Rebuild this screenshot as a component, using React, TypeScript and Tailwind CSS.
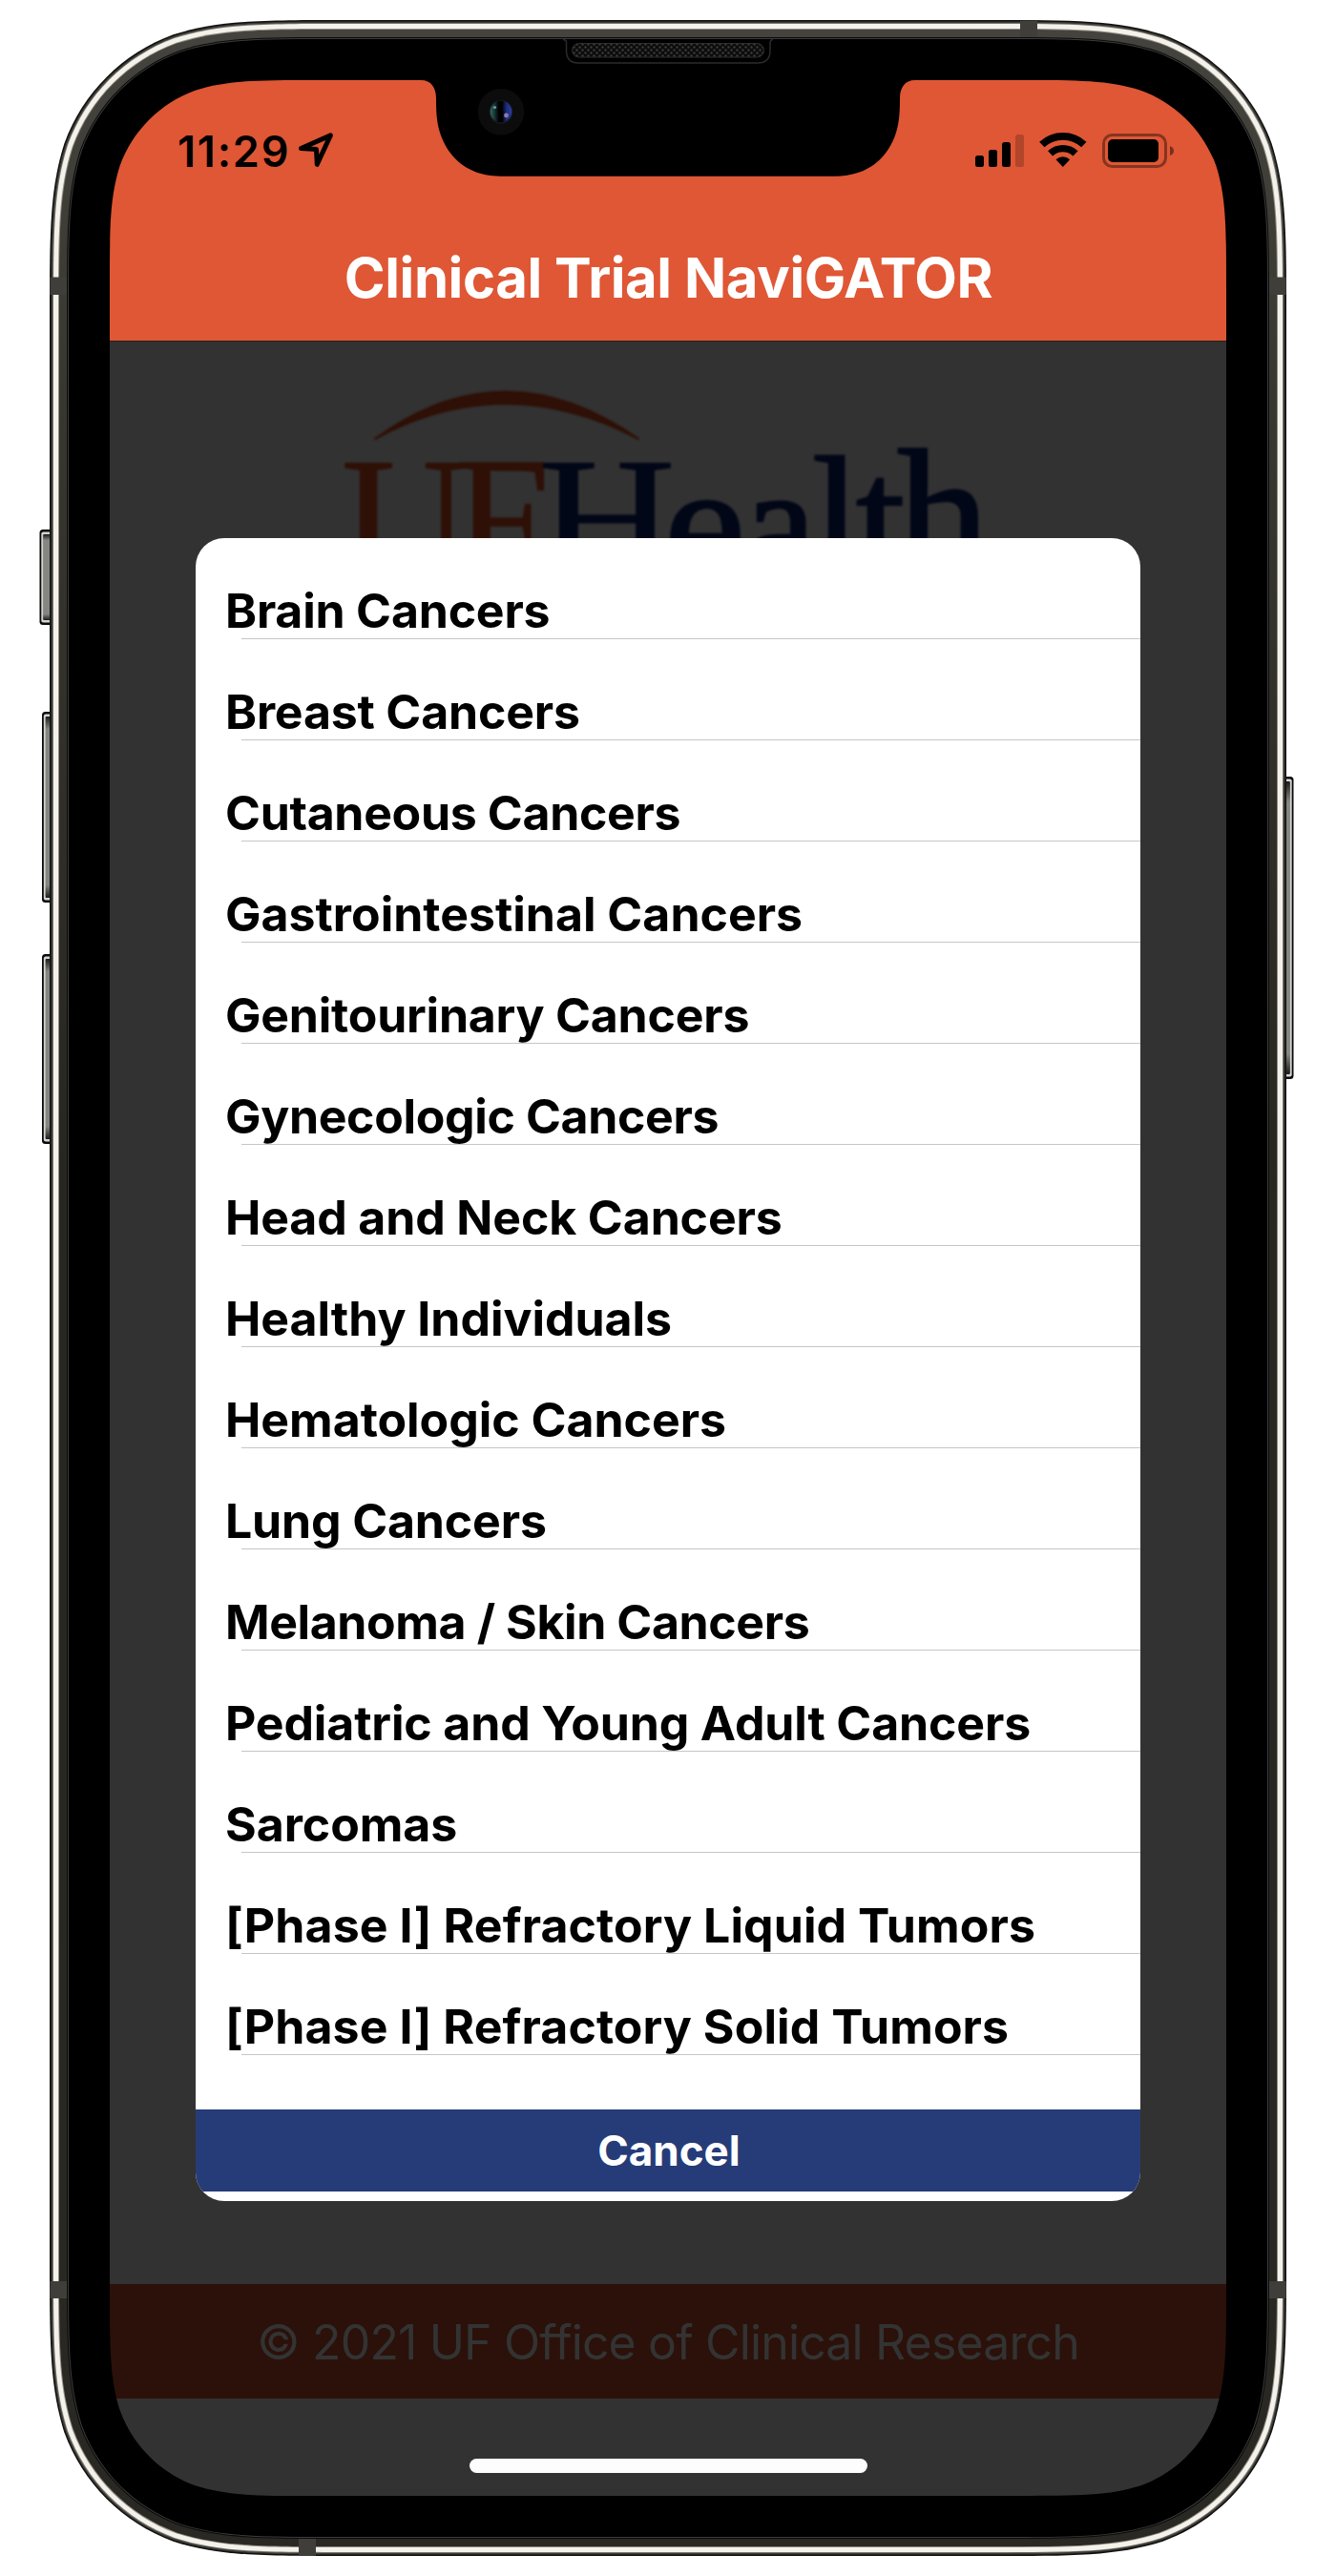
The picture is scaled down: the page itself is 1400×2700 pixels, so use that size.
const options = [
  { label: "Brain Cancers", tracking: "tracking-[-0.2px]" },
  { label: "Breast Cancers", tracking: "tracking-[-0.19px]" },
  { label: "Cutaneous Cancers", tracking: "tracking-[-0.34px]" },
  { label: "Gastrointestinal Cancers", tracking: "tracking-[0px]" },
  { label: "Genitourinary Cancers", tracking: "tracking-[-0.22px]" },
  { label: "Gynecologic Cancers", tracking: "tracking-[-0.36px]" },
  { label: "Head and Neck Cancers", tracking: "tracking-[-0.13px]" },
  { label: "Healthy Individuals", tracking: "tracking-[-0.03px]" },
  { label: "Hematologic Cancers", tracking: "tracking-[-0.03px]" },
  { label: "Lung Cancers", tracking: "tracking-[-0.16px]" },
  { label: "Melanoma / Skin Cancers", tracking: "tracking-[-0.4px]" },
  { label: "Pediatric and Young Adult Cancers", tracking: "tracking-[-0.14px]" },
  { label: "Sarcomas", tracking: "tracking-[-0.05px]" },
  { label: "[Phase I] Refractory Liquid Tumors", tracking: "tracking-[0.09px]" },
  { label: "[Phase I] Refractory Solid Tumors", tracking: "tracking-[0.08px]" },
];

/** Continuous-curvature rounded rectangle, as used for the device outline. */
function squircle(x: number, y: number, w: number, h: number, r: number) {
  const a = 1.52866 * r, b = 1.08849 * r, c = 0.86841 * r, d = 0.63149 * r;
  const e = 0.07491 * r, f = 0.37282 * r, g = 0.16906 * r;
  const R = x + w, B = y + h;
  return [
    `M${x + a} ${y}H${R - a}`,
    `C${R - b} ${y} ${R - c} ${y} ${R - d} ${y + e}C${R - f} ${y + g} ${R - g} ${y + f} ${R - e} ${y + d}C${R} ${y + c} ${R} ${y + b} ${R} ${y + a}`,
    `V${B - a}`,
    `C${R} ${B - b} ${R} ${B - c} ${R - e} ${B - d}C${R - g} ${B - f} ${R - f} ${B - g} ${R - d} ${B - e}C${R - c} ${B} ${R - b} ${B} ${R - a} ${B}`,
    `H${x + a}`,
    `C${x + b} ${B} ${x + c} ${B} ${x + d} ${B - e}C${x + f} ${B - g} ${x + g} ${B - f} ${x + e} ${B - d}C${x} ${B - c} ${x} ${B - b} ${x} ${B - a}`,
    `V${y + a}`,
    `C${x} ${y + b} ${x} ${y + c} ${x + e} ${y + d}C${x + g} ${y + f} ${x + f} ${y + g} ${x + d} ${y + e}C${x + c} ${y} ${x + b} ${y} ${x + a} ${y}Z`,
  ].join("");
}

const ring = (i: number) => squircle(52 + i, 21 + i, 1296 - 2 * i, 2658 - 2 * i, 205 - i);

// Metal rim, from the outside in: inset and colour of each layer.
const rim: [number, string][] = [
  [0, "#10100e"],
  [1.5, "#3c3b37"],
  [3, "#77756f"],
  [4, "#f4f1ea"],
  [9, "#8f8d85"],
  [10, "url(#band)"],
  [18, "#0a0a0a"],
  [19, "#3c3c3e"],
  [20, "#000"],
];

function SideButton({ x, y, w, h, flip }: { x: number; y: number; w: number; h: number; flip?: boolean }) {
  return (
    <g transform={flip ? `translate(${2 * x + w} 0) scale(-1 1)` : undefined}>
      <rect x={x} y={y} width={w + 8} height={h} rx="3.5" fill="#0a0a0a" />
      <rect x={x + 1.8} y={y + 2.5} width={w + 8} height={h - 5} rx="2" fill="#d4d4cf" />
      <rect x={x + 3.6} y={y + 5} width={w + 8} height={h - 10} rx="1" fill="url(#key)" />
    </g>
  );
}

function PhoneBody() {
  return (
    <svg className="absolute inset-0" width="1400" height="2700" viewBox="0 0 1400 2700">
      <defs>
        <linearGradient id="band" x1="0" y1="0" x2="0" y2="1">
          <stop offset="0" stopColor="#44433d" />
          <stop offset=".15" stopColor="#38372f" />
          <stop offset=".45" stopColor="#282620" />
          <stop offset="1" stopColor="#2a2823" />
        </linearGradient>
        <linearGradient id="key" x1="0" y1="0" x2="0" y2="1">
          <stop offset="0" stopColor="#1c1c1a" />
          <stop offset=".07" stopColor="#858581" />
          <stop offset=".93" stopColor="#858581" />
          <stop offset="1" stopColor="#1c1c1a" />
        </linearGradient>
      </defs>
      <SideButton x={41.5} y={555} w={11} h={100} />
      <SideButton x={44} y={746} w={9} h={200} />
      <SideButton x={44} y={1000} w={9} h={199} />
      <SideButton x={1347} y={814} w={8.5} h={317} flip />
      {rim.map(([inset, fill]) => (
        <path key={inset} d={ring(inset)} fill={fill} />
      ))}
      <g fill="#3f3e3a">
        <path d="M52.3 290.5h17.7v18.5h-17.7zM1330 290.5h17.7v18.5h-17.7zM52.3 2391h17.7v18h-17.7zM1330 2391h17.7v18h-17.7z" />
        <path d="M1069 21.5h18v17.5h-18zM313 2661h18v17.7h-18z" />
      </g>
    </svg>
  );
}

function PhoneFace() {
  return (
    <svg className="pointer-events-none absolute inset-0" width="1400" height="2700" viewBox="0 0 1400 2700">
      <defs>
        <pattern id="mesh" width="6" height="6" patternUnits="userSpaceOnUse">
          <rect width="6" height="6" fill="#0c0c0c" />
          <circle cx="1.5" cy="1.5" r="1.2" fill="#3a3a3a" />
          <circle cx="4.5" cy="4.5" r="1.2" fill="#3a3a3a" />
        </pattern>
        <linearGradient id="lens" x1="0" x2="1">
          <stop offset="0" stopColor="#2d6b62" />
          <stop offset=".28" stopColor="#10201f" />
          <stop offset=".4" stopColor="#000" />
          <stop offset=".55" stopColor="#000" />
          <stop offset=".75" stopColor="#1c2c78" />
          <stop offset="1" stopColor="#2c3ca4" />
        </linearGradient>
      </defs>
      <path fillRule="evenodd" d={squircle(80, 49, 1240, 2602, 177) + squircle(115, 84, 1170, 2532, 142)} />
      <path d="M436 80V84H441C452 84 457 92 457 103C457 116 457.5 128 461 139C469 164 489 184.7 525 184.7H875C911 184.7 931 164 939 139C942.5 128 943 116 943 103C943 92 948 84 959 84H964V80Z" />
      <path d="M590 41.5Q593.5 41.5 593.5 45V53Q593.5 66 606 66H794Q807 66 807 53V45Q807 41.5 810 41.5" fill="none" stroke="#2b2b2d" strokeWidth="1.5" />
      <rect x="599.5" y="45.5" width="201" height="14.5" rx="7.25" fill="url(#mesh)" stroke="#2e2e2e" />
      <circle cx="525" cy="117.3" r="24.3" fill="#0c0c0d" />
      <circle cx="525" cy="117.3" r="12.5" fill="#15181a" />
      <circle cx="525" cy="117" r="11.3" fill="url(#lens)" />
      <circle cx="518.5" cy="112.5" r="1.6" fill="#6a9aa2" />
      <circle cx="530.5" cy="121" r="2.4" fill="#9079a8" />
    </svg>
  );
}

function LocationArrow() {
  return (
    <svg width="38" height="38" viewBox="314 140 38 38">
      <path d="M317.5 157.5L348.4 143.9L334.3 174.3L333.5 158.6Z" fill="none" stroke="#000" strokeWidth="5" strokeLinejoin="round" />
    </svg>
  );
}

function StatusIcons() {
  return (
    <svg width="210" height="40" viewBox="1021 138 210 40">
      <rect x="1022" y="163" width="9" height="12" rx="2.5" />
      <rect x="1036" y="157" width="9" height="18" rx="2.5" />
      <rect x="1050" y="149" width="9" height="26" rx="2.5" />
      <rect x="1064" y="141" width="9" height="34" rx="2.5" fillOpacity=".2" />
      <g fill="none" stroke="#000">
        <path d="M1091.8 151.5A32.2 32.2 0 0 1 1135.8 151.5" strokeWidth="7.8" />
        <path d="M1100.6 160.9A19.3 19.3 0 0 1 1127 160.9" strokeWidth="7.3" />
      </g>
      <path d="M1106.5 167.2A10.7 10.7 0 0 1 1121.1 167.2L1113.8 175Z" />
      <rect x="1156.5" y="141.5" width="65" height="33" rx="9" fill="none" stroke="#000" strokeOpacity=".4" strokeWidth="3" />
      <rect x="1161" y="146" width="53" height="24" rx="5" />
      <path d="M1226 153Q1230 154.5 1230 158T1226 163Z" fillOpacity=".45" />
    </svg>
  );
}

function HealthLogo() {
  return (
    <svg
      className="ml-[235px] mt-[42px] font-['Liberation_Serif',serif] blur-[0.8px]"
      width="700"
      height="170"
      viewBox="350 400 700 170"
    >
      <path d="M393 460Q528 361 669 460Q528 386.5 393 460Z" fill="#2f1006" stroke="#2f1006" strokeWidth="2" strokeLinejoin="round" />
      <g fill="#2f1006" stroke="#2f1006" fontSize="185">
        <text x="358" y="606">U</text>
        <text x="476" y="606" textLength="100" lengthAdjust="spacingAndGlyphs">F</text>
      </g>
      <g fill="#020718" stroke="#020718" strokeWidth="2.5" fontSize="185">
        <text x="564" y="606" strokeWidth="1" textLength="144" lengthAdjust="spacingAndGlyphs">H</text>
        <text x="696" y="606" fontSize="172" textLength="85" lengthAdjust="spacingAndGlyphs">e</text>
        <text x="779" y="606" fontSize="172">a</text>
        <text x="851" y="606">l</text>
        <text x="897" y="606">t</text>
        <text x="940" y="606" fontSize="194">h</text>
      </g>
    </svg>
  );
}

function StatusBar() {
  return (
    <div className="flex h-[150px] items-start justify-between pl-[71px] pr-[54px] pt-[54px]">
      <div className="flex items-start gap-2">
        <span className="text-[45px] font-semibold leading-[41px] tracking-[1.8px] text-black">11:29</span>
        <LocationArrow />
      </div>
      <StatusIcons />
    </div>
  );
}

function CancerPicker() {
  return (
    <div className="absolute inset-0 flex justify-center pt-[480px]">
      <div className="flex h-[1743px] w-[990px] flex-col overflow-hidden rounded-[30px] bg-white">
        <ul>
          {options.map(({ label, tracking }) => (
            <li key={label} className="flex h-[106px] flex-col">
              <span className={`h-[105px] whitespace-nowrap pl-[31px] pt-[46px] text-[50px] font-bold leading-[60px] text-black ${tracking}`}>
                {label}
              </span>
              <span className="ml-12 h-px bg-[#c6c6c8]" />
            </li>
          ))}
        </ul>
        <button className="mb-[10px] mt-auto flex h-[86px] items-start justify-center bg-[#263c78] pl-0.5 pt-[17px] text-[44px] font-bold leading-[52px] text-white">
          Cancel
        </button>
      </div>
    </div>
  );
}

export default function App() {
  return (
    <div className="relative h-[2700px] w-[1400px] overflow-hidden bg-white pl-[115px] pt-[84px] font-['Inter',sans-serif]">
      <PhoneBody />
      <div className="relative flex h-[2532px] w-[1170px] flex-col overflow-hidden rounded-[130px] bg-[#323232]">
        <header className="flex h-[274px] shrink-0 flex-col border-b border-[#2a1d18] bg-[#df5735]">
          <StatusBar />
          <h1 className="pl-px pt-[22px] text-center text-[58px] font-bold leading-[70px] tracking-[-0.41px] text-white">
            Clinical Trial NaviGATOR
          </h1>
        </header>
        <main className="flex-1">
          <HealthLogo />
        </main>
        <footer className="mb-[102px] flex h-[120px] shrink-0 items-start justify-center bg-[#2b110a] pt-[31px] text-[50px] leading-[60px] tracking-[-0.86px] text-[#333]">
          © 2021 UF Office of Clinical Research
        </footer>
        <CancerPicker />
        <div className="absolute bottom-6 left-[377px] h-[15px] w-[417px] rounded-full bg-[#fdfdfd]" />
      </div>
      <PhoneFace />
    </div>
  );
}
